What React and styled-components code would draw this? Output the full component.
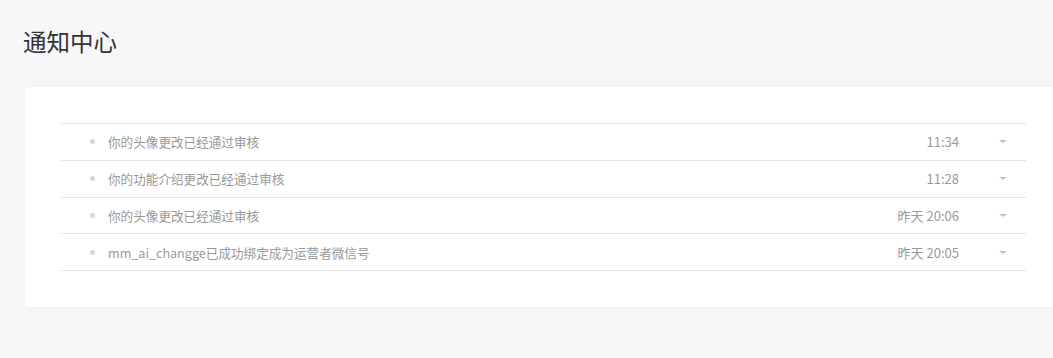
import React from "react";
import styled, { createGlobalStyle } from "styled-components";

const GlobalStyle = createGlobalStyle`
  html, body {
    margin: 0;
    padding: 0;
    background: #f6f7f9;
    font-family: "Noto Sans CJK SC", "Noto Sans", sans-serif;
    overflow: hidden;
  }
`;

const Page = styled.div`
  width: 1053px;
  height: 358px;
  padding: 24px 0 0 24px;
  box-sizing: border-box;
  overflow: hidden;
`;

const Title = styled.h1`
  margin: 0 0 0 -1px;
  font-size: 23.5px;
  line-height: 34px;
  font-weight: 400;
  color: #333;
`;

const Card = styled.div`
  margin-top: 29px;
  margin-left: 1px;
  width: 1037px;
  background: #fff;
  border-radius: 3px;
  box-shadow: 0 1px 4px rgba(0, 0, 0, 0.04);
  padding: 36px;
  box-sizing: border-box;
`;

const List = styled.ul`
  list-style: none;
  margin: 0;
  padding: 0;
  border-top: 1px solid #e4e4e4;
`;

const Row = styled.li`
  display: flex;
  align-items: center;
  height: 35.75px;
  border-bottom: 1px solid #e4e4e4;
  font-size: 13px;
  color: #999;
`;

const Dot = styled.span`
  width: 5px;
  height: 5px;
  border-radius: 50%;
  background: #d6d6d6;
  margin-left: 29px;
  margin-right: 13px;
  flex: none;
`;

const Message = styled.span`
  flex: 1;
  white-space: nowrap;
  font-size: 12.6px;
`;

const Time = styled.span`
  white-space: nowrap;
  text-align: right;
`;

const CaretBox = styled.span`
  width: 46px;
  margin-left: 21px;
  display: flex;
  justify-content: center;
  flex: none;
`;

const Caret = styled.span`
  width: 0;
  height: 0;
  border-left: 4px solid transparent;
  border-right: 4px solid transparent;
  border-top: 3px solid #c0c0c0;
`;

const items = [
  { text: "你的头像更改已经通过审核", time: "11:34" },
  { text: "你的功能介绍更改已经通过审核", time: "11:28" },
  { text: "你的头像更改已经通过审核", time: "昨天 20:06" },
  { text: "mm_ai_changge已成功绑定成为运营者微信号", time: "昨天 20:05" },
];

export default function App() {
  return (
    <>
      <GlobalStyle />
      <Page>
        <Title>通知中心</Title>
        <Card>
          <List>
            {items.map((it, i) => (
              <Row key={i}>
                <Dot />
                <Message>{it.text}</Message>
                <Time>{it.time}</Time>
                <CaretBox>
                  <Caret />
                </CaretBox>
              </Row>
            ))}
          </List>
        </Card>
      </Page>
    </>
  );
}
